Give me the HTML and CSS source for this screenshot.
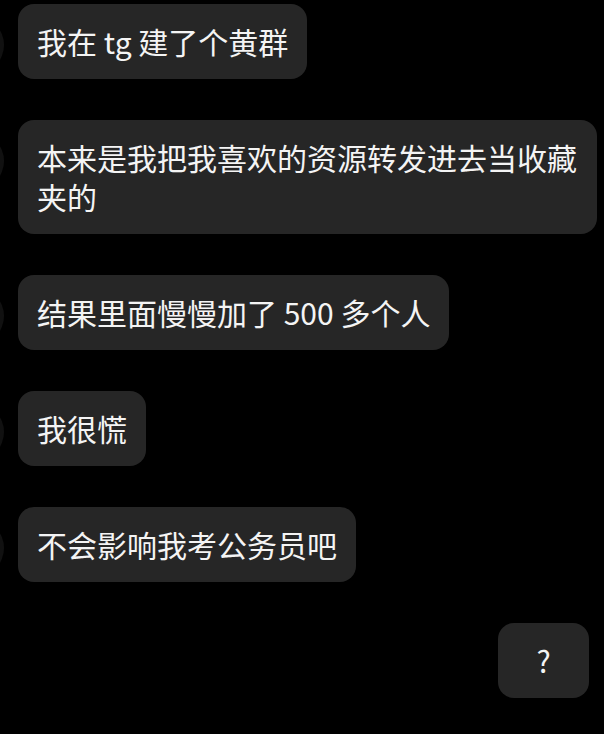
FILE: index.html
```html
<!DOCTYPE html>
<html lang="zh-CN">
<head>
    <meta charset="UTF-8">
    <meta name="viewport" content="width=device-width, initial-scale=1.0">
    <title>聊天</title>
    <link rel="stylesheet" href="styles.css">
</head>
<body>

<!-- Chat thread -->
<div class="chat">
    <div class="row">
        <div class="avatar"></div>
        <div class="bubble">我在 tg 建了个黄群</div>
    </div>
    <div class="row">
        <div class="avatar"></div>
        <div class="bubble">本来是我把我喜欢的资源转发进去当收藏夹的</div>
    </div>
    <div class="row">
        <div class="avatar"></div>
        <div class="bubble">结果里面慢慢加了 500 多个人</div>
    </div>
    <div class="row">
        <div class="avatar"></div>
        <div class="bubble">我很慌</div>
    </div>
    <div class="row">
        <div class="avatar"></div>
        <div class="bubble">不会影响我考公务员吧</div>
    </div>
    <div class="row mine">
        <div class="bubble short">?</div>
    </div>
</div>

</body>
</html>
```

FILE: styles.css
```css
body {
    margin: 0;
    background-color: #000;
    color: #f4f4f4;
    font-family: "Noto Sans CJK SC", "Noto Sans", sans-serif;
}

.chat {
    display: flex;
    flex-direction: column;
    gap: 41px;
    padding-top: 4px;
}

.row {
    display: flex;
    align-items: flex-start;
    gap: 14px;
}

/* avatar sits mostly off screen, only its edge shows */
.avatar {
    flex: none;
    width: 56px;
    height: 56px;
    margin-left: -52px;
    margin-top: 13px;
    border-radius: 50%;
    background: radial-gradient(circle at 50% 50%, #111 80%, #9a9ca6 90%, #fafafa 100%);
}

.bubble {
    box-sizing: border-box;
    max-width: 579px;
    padding: 18px 19px;
    background-color: #262626;
    border-radius: 16px;
    font-size: 30px;
    line-height: 39px;
}

.mine {
    justify-content: flex-end;
    padding-right: 15px;
}

.bubble.short {
    min-width: 91px;
    text-align: center;
}
```
